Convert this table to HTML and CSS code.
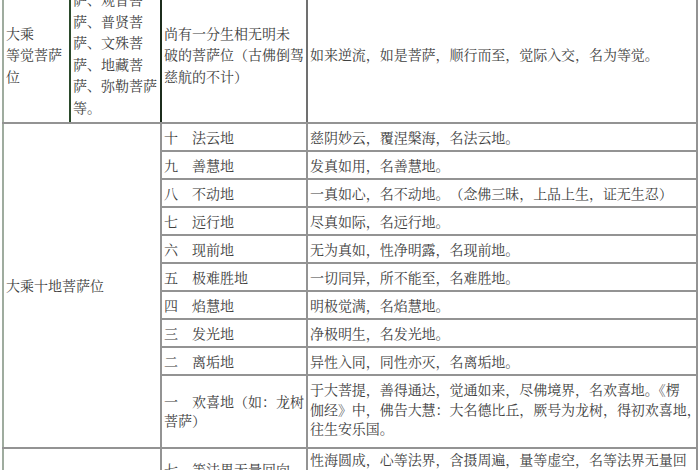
FILE: index.html
```html
<!DOCTYPE html>
<html lang="zh-CN">
<head>
<meta charset="utf-8">
<title>菩萨位</title>
<link rel="stylesheet" href="styles.css">
</head>
<body>
<div class="page">
<table class="grid">
  <colgroup>
    <col class="w1"><col class="w2"><col class="w3"><col class="w4">
  </colgroup>
  <tr class="top">
    <td class="name">大乘<br>等觉菩萨<br>位</td>
    <td class="list">萨、观音菩<br>萨、普贤菩<br>萨、文殊菩<br>萨、地藏菩<br>萨、弥勒菩萨<br>等。</td>
    <td class="note">尚有一分生相无明未<br>破的菩萨位（古佛倒驾<br>慈航的不计）</td>
    <td class="desc">如来逆流，如是菩萨，顺行而至，觉际入交，名为等觉。</td>
  </tr>
  <tr>
    <td class="group" colspan="2" rowspan="10">大乘十地菩萨位</td>
    <td class="lv">十　法云地</td>
    <td class="desc">慈阴妙云，覆涅槃海，名法云地。</td>
  </tr>
  <tr><td class="lv">九　善慧地</td><td class="desc">发真如用，名善慧地。</td></tr>
  <tr><td class="lv">八　不动地</td><td class="desc">一真如心，名不动地。　（念佛三昧，上品上生，证无生忍）</td></tr>
  <tr><td class="lv">七　远行地</td><td class="desc">尽真如际，名远行地。</td></tr>
  <tr><td class="lv">六　现前地</td><td class="desc">无为真如，性净明露，名现前地。</td></tr>
  <tr><td class="lv">五　极难胜地</td><td class="desc">一切同异，所不能至，名难胜地。</td></tr>
  <tr><td class="lv">四　焰慧地</td><td class="desc">明极觉满，名焰慧地。</td></tr>
  <tr><td class="lv">三　发光地</td><td class="desc">净极明生，名发光地。</td></tr>
  <tr><td class="lv">二　离垢地</td><td class="desc">异性入同，同性亦灭，名离垢地。</td></tr>
  <tr class="joy">
    <td class="lv">一　欢喜地（如：龙树<br>菩萨）</td>
    <td class="desc">于大菩提，善得通达，觉通如来，尽佛境界，名欢喜地。《楞<br>伽经》中，佛告大慧：大名德比丘，厥号为龙树，得初欢喜地，<br>往生安乐国。</td>
  </tr>
  <tr class="last">
    <td class="group" colspan="2"></td>
    <td class="lv">七　等法界无量回向</td>
    <td class="desc">性海圆成，心等法界，含摄周遍，量等虚空，名等法界无量回</td>
  </tr>
</table>
</div>
</body>
</html>
```

FILE: styles.css
```css
html, body {
  margin: 0;
  padding: 0;
  background: #ffffff;
}

.page {
  height: 470px;
  overflow: hidden;
  padding-left: 2px;
}

.grid {
  margin-top: -13px;
  border-collapse: collapse;
  table-layout: fixed;
  width: 696px;
  font-family: "Noto Serif CJK SC", "Noto Sans CJK SC", sans-serif;
  font-size: 14px;
  line-height: 20px;
  color: #404040;
}

.w1 { width: 67px; }
.w2 { width: 91px; }
.w3 { width: 146px; }
.w4 { width: 390px; }

.grid td {
  border: 2px solid #939393;
  padding: 3px 2px;
  vertical-align: middle;
  white-space: nowrap;
}

.grid td:first-child {
  border-left-color: #9fac9f;
}

.top td {
  line-height: 21.6px;
}

.top .name {
  border-right-color: #2b4a2b;
}

.top .list {
  padding: 0 2px 3px 2px;
  border-left-color: #2b4a2b;
  border-right-color: #1c2c1c;
}

.top .note {
  border-left-color: #1c2c1c;
  border-right-color: #707070;
}

.group {
  border-right-color: #1c2c1c;
  border-bottom-color: #849484;
  padding-left: 4px;
}

.lv {
  border-left-color: #1c2c1c;
  border-right-color: #707070;
}

.desc {
  border-left-color: #707070;
  border-right-color: #8a8a8a;
  padding-left: 2px;
  letter-spacing: -0.05px;
}

.joy {
  height: 73px;
}

.joy .desc {
  line-height: 19.5px;
  padding-bottom: 6px;
}

.joy .lv {
  line-height: 19px;
  padding-bottom: 4px;
}

.last td {
  vertical-align: top;
  padding-top: 0;
  height: 60px;
}

.last .lv {
  padding-top: 10px;
}
```
